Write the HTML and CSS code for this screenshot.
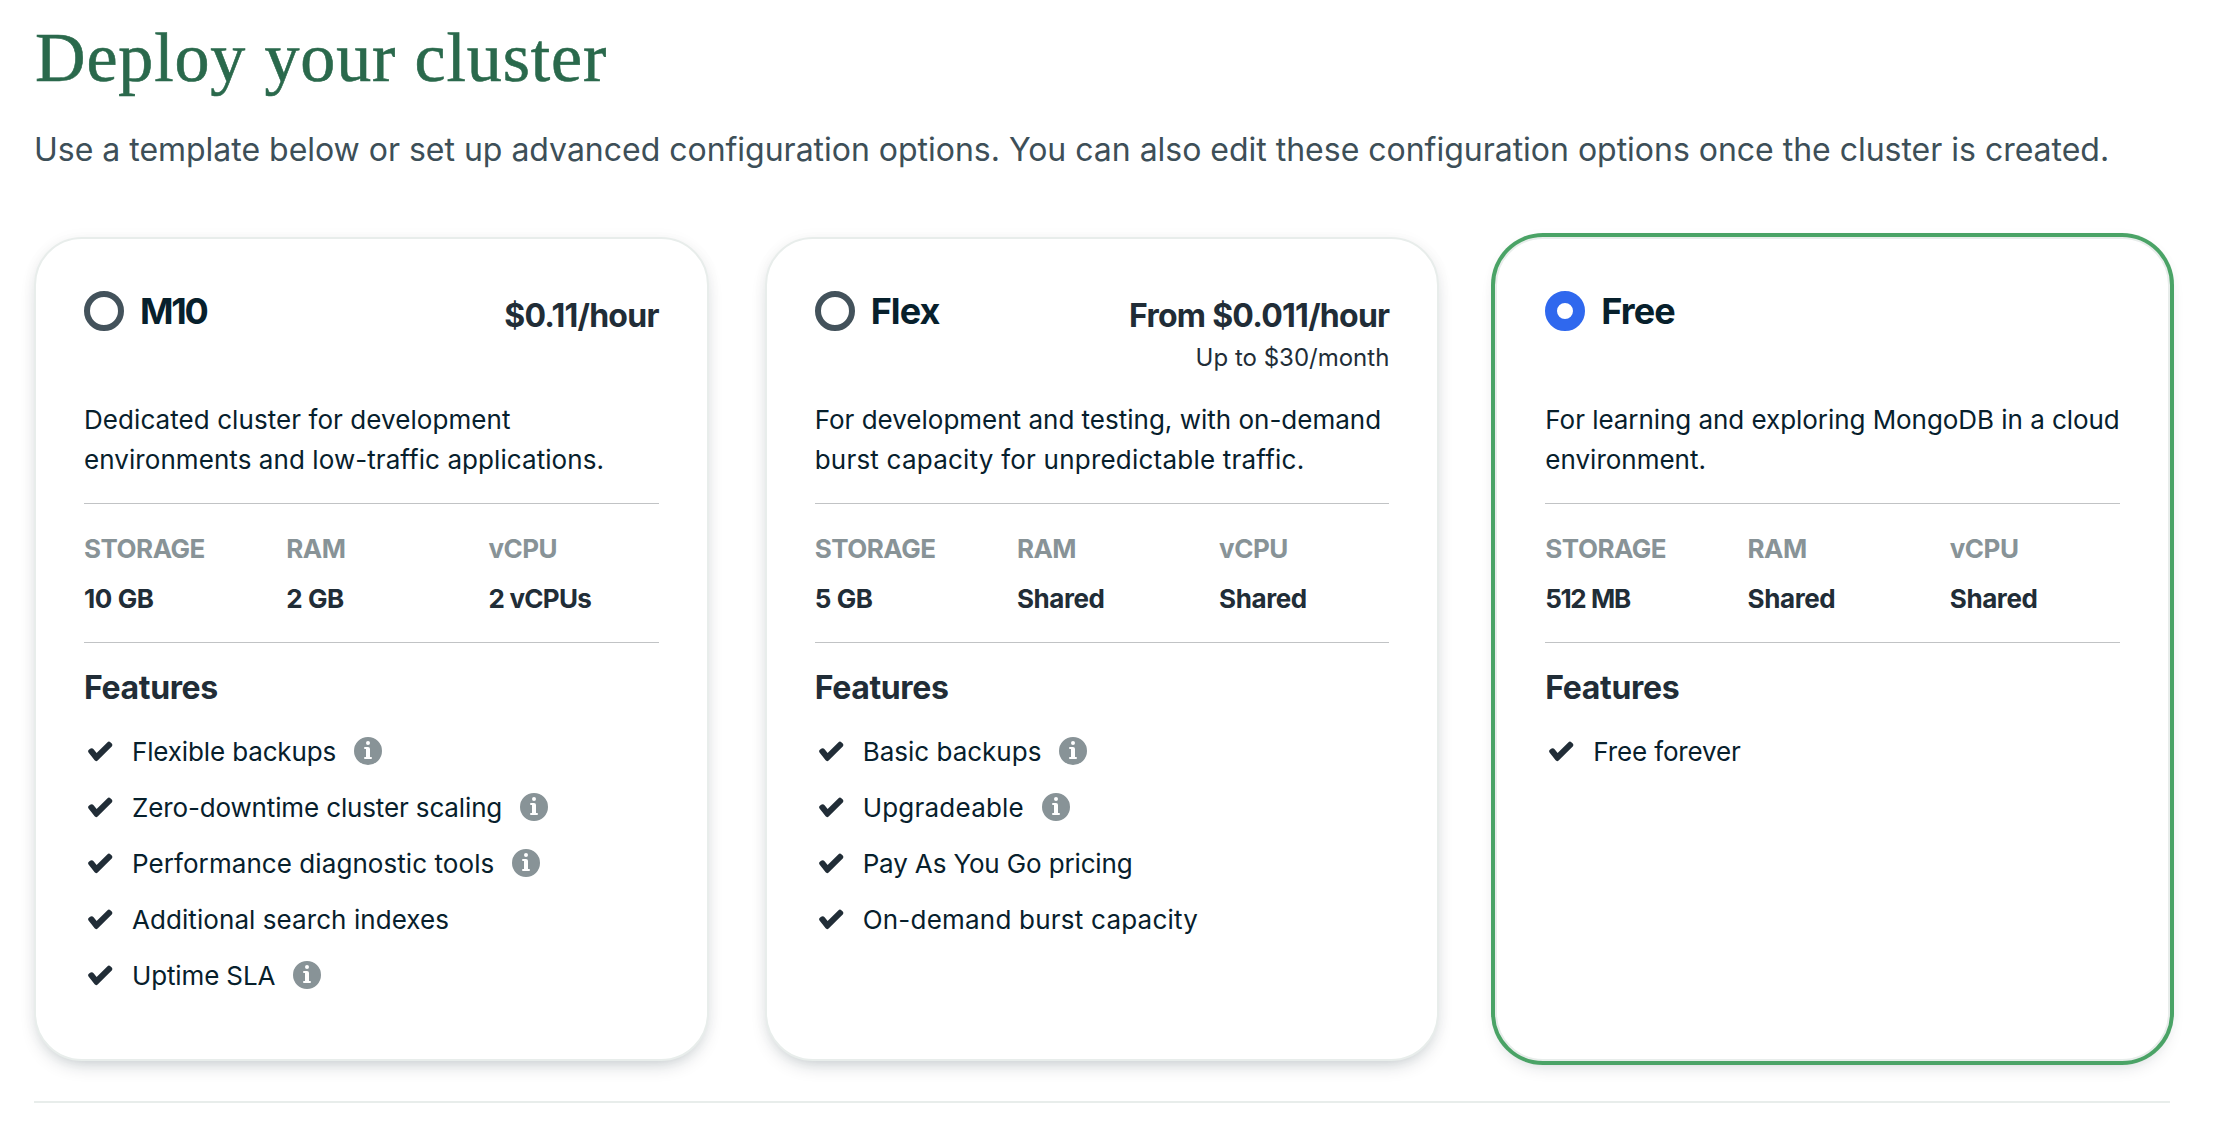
FILE: index.html
```html
<!DOCTYPE html>
<html lang="en">
<head>
<meta charset="utf-8">
<title>Deploy your cluster</title>
<link rel="stylesheet" href="styles.css">
</head>
<body>
<svg class="sprite" aria-hidden="true">
  <symbol id="check" viewBox="0 0 16 16"><path fill="currentColor" d="M6.30583 9.05037L11.7611 3.59509C12.1516 3.20457 12.7848 3.20457 13.1753 3.59509L13.8824 4.3022C14.273 4.69273 14.273 5.32589 13.8824 5.71642L6.81525 12.7836C6.38819 13.2106 5.68292 13.1646 5.31505 12.6856L2.26638 8.71605C1.92998 8.27804 2.01235 7.65025 2.45036 7.31385L3.04518 6.85702C3.59269 6.43652 4.37742 6.53949 4.79792 7.087L6.30583 9.05037Z"/></symbol>
  <symbol id="info" viewBox="0 0 16 16"><path fill="currentColor" fill-rule="evenodd" d="M8 15A7 7 0 1 0 8 1a7 7 0 0 0 0 14ZM9 4a1 1 0 1 1-2 0 1 1 0 0 1 2 0ZM8 6a1 1 0 0 1 1 1v4h.5a.5.5 0 0 1 0 1h-3a.5.5 0 0 1 0-1H7V7h-.5a.5.5 0 0 1 0-1H8Z"/></symbol>
</svg>
<main class="page">
  <h1 class="title">Deploy your cluster</h1>
  <p class="subtitle">Use a template below or set up advanced configuration options. You can also edit these configuration options once the cluster is created.</p>

  <div class="cards">
    <section class="card">
      <header class="card-header">
        <div class="choice"><span class="radio"></span><h2 class="name name-tight">M10</h2></div>
        <div class="pricing"><div class="price">$0.11/hour</div></div>
      </header>
      <p class="description loose">Dedicated cluster for development<br>environments and low-traffic applications.</p>
      <dl class="specs">
        <div><dt>STORAGE</dt><dd>10 GB</dd></div>
        <div><dt>RAM</dt><dd>2 GB</dd></div>
        <div><dt>vCPU</dt><dd class="snug">2 vCPUs</dd></div>
      </dl>
      <h3 class="features-title">Features</h3>
      <ul class="features">
        <li><svg class="icon check"><use href="#check"/></svg><span class="tight">Flexible backups</span><svg class="icon info"><use href="#info"/></svg></li>
        <li><svg class="icon check"><use href="#check"/></svg><span class="tight">Zero-downtime cluster scaling</span><svg class="icon info"><use href="#info"/></svg></li>
        <li><svg class="icon check"><use href="#check"/></svg><span class="loose">Performance diagnostic tools</span><svg class="icon info"><use href="#info"/></svg></li>
        <li><svg class="icon check"><use href="#check"/></svg><span class="loose">Additional search indexes</span></li>
        <li><svg class="icon check"><use href="#check"/></svg><span class="tight">Uptime SLA</span><svg class="icon info"><use href="#info"/></svg></li>
      </ul>
    </section>

    <section class="card">
      <header class="card-header">
        <div class="choice"><span class="radio"></span><h2 class="name">Flex</h2></div>
        <div class="pricing"><div class="price">From $0.011/hour</div><div class="price-note">Up to $30/month</div></div>
      </header>
      <p class="description">For development and testing, with on-demand<br><span class="looser">burst capacity for unpredictable traffic.</span></p>
      <dl class="specs">
        <div><dt>STORAGE</dt><dd>5 GB</dd></div>
        <div><dt>RAM</dt><dd>Shared</dd></div>
        <div><dt>vCPU</dt><dd>Shared</dd></div>
      </dl>
      <h3 class="features-title">Features</h3>
      <ul class="features">
        <li><svg class="icon check"><use href="#check"/></svg><span>Basic backups</span><svg class="icon info"><use href="#info"/></svg></li>
        <li><svg class="icon check"><use href="#check"/></svg><span class="looser">Upgradeable</span><svg class="icon info"><use href="#info"/></svg></li>
        <li><svg class="icon check"><use href="#check"/></svg><span class="tight">Pay As You Go pricing</span></li>
        <li><svg class="icon check"><use href="#check"/></svg><span class="looser">On-demand burst capacity</span></li>
      </ul>
    </section>

    <section class="card selected">
      <header class="card-header">
        <div class="choice"><span class="radio checked"></span><h2 class="name">Free</h2></div>
      </header>
      <p class="description"><span class="close">For learning and exploring MongoDB in a cloud</span><br>environment.</p>
      <dl class="specs">
        <div><dt>STORAGE</dt><dd class="snugger">512 MB</dd></div>
        <div><dt>RAM</dt><dd>Shared</dd></div>
        <div><dt>vCPU</dt><dd>Shared</dd></div>
      </dl>
      <h3 class="features-title">Features</h3>
      <ul class="features">
        <li><svg class="icon check"><use href="#check"/></svg><span class="tight">Free forever</span></li>
      </ul>
    </section>
  </div>
  <hr class="separator">
</main>
</body>
</html>
```
FILE: styles.css
```css
*, *::before, *::after { box-sizing: border-box; }
body, h1, h2, h3, p, dl, dd, ul { margin: 0; padding: 0; }

body {
  background: #fff;
  color: #07202c;
  font: 400 26px/40px Inter, "Liberation Sans", sans-serif;
}

.sprite { position: absolute; width: 0; height: 0; }

.page { width: 2170px; padding: 18px 0 0 34px; }

.title {
  color: #2a694c;
  font: 400 70px/80px "Liberation Serif", serif;
  letter-spacing: 0.85px;
  -webkit-text-stroke: 0.6px #2a694c;
  padding-left: 1px;
}

.subtitle {
  margin-top: 28px;
  color: #3d4f58;
  font-size: 32px;
  line-height: 48px;
  letter-spacing: -0.015px;
  white-space: nowrap;
}

.cards {
  display: grid;
  grid-template-columns: repeat(3, 1fr);
  gap: 56px;
  margin-top: 63px;
}

.card {
  min-width: 0;
  padding: 52px 48px 67px;
  border: 2px solid #e8edeb;
  border-radius: 48px;
  background: #fff;
  box-shadow: 0 8px 20px -8px rgba(0, 30, 43, 0.3), 0 0 16px rgba(0, 30, 43, 0.03);
}

.card.selected {
  box-shadow: 0 0 0 4px #4aa366, 0 8px 20px -8px rgba(0, 30, 43, 0.3), 0 0 16px rgba(0, 30, 43, 0.03);
}

.card-header {
  display: flex;
  justify-content: space-between;
  height: 109px;
}

.choice { display: flex; gap: 16px; height: 40px; align-items: center; }

.radio {
  width: 40px;
  height: 40px;
  border: 6px solid #43525b;
  border-radius: 50%;
}

.radio.checked { border: 12px solid #2f68ee; }

.name { font-size: 36px; font-weight: 700; letter-spacing: -0.95px; }
.name-tight { letter-spacing: -2.3px; }

.pricing { padding-top: 5px; color: #212d37; text-align: right; white-space: nowrap; }
.price { font-size: 32px; font-weight: 700; letter-spacing: -0.75px; }
.price-note { margin-top: 6px; font-size: 24px; line-height: 32px; }

.description { padding-bottom: 23px; white-space: nowrap; }

/* Fine tracking for body text */
.tight { letter-spacing: -0.14px; }
.close { letter-spacing: -0.05px; }
.loose { letter-spacing: 0.07px; }
.looser { letter-spacing: 0.22px; }

.specs {
  display: grid;
  grid-template-columns: repeat(3, 1fr);
  column-gap: 32px;
  padding: 25px 0 23px;
  border: solid #c1c3c5;
  border-width: 1px 0;
  font-weight: 700;
  white-space: nowrap;
}

.specs dt { color: #889397; letter-spacing: -0.5px; }
.specs dd { margin-top: 10px; color: #212d37; letter-spacing: -0.4px; }
.specs .snug { letter-spacing: -0.75px; }
.specs .snugger { letter-spacing: -1.4px; word-spacing: 1px; }

.features-title {
  margin-top: 21px;
  color: #212d37;
  font-size: 32px;
  line-height: 48px;
  font-weight: 700;
  letter-spacing: -0.35px;
}

.features {
  display: grid;
  gap: 24px;
  margin-top: 23px;
  list-style: none;
}

.features li { display: flex; height: 32px; line-height: 34px; white-space: nowrap; }
.features li:last-child { margin-bottom: 1px; }

.icon { flex: none; width: 32px; height: 32px; }
.check { margin-right: 16px; color: #212d37; }
.info { margin-left: 16px; color: #889397; }

.separator {
  height: 2px;
  margin: 40px 0 0;
  border: 0;
  background: #e8edeb;
}
```
